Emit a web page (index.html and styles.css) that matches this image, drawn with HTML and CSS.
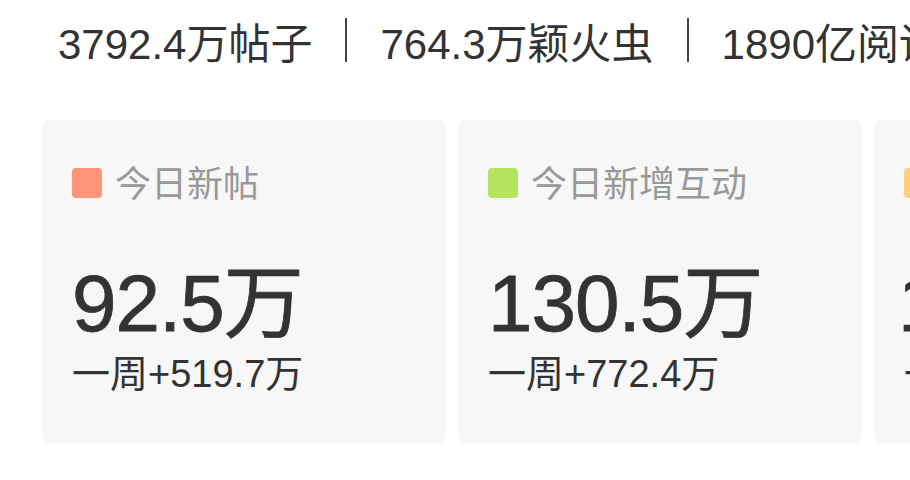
FILE: index.html
```html
<!DOCTYPE html>
<html lang="zh">
<head>
<meta charset="utf-8">
<link rel="stylesheet" href="styles.css">
</head>
<body>
<div class="page">
  <div class="summary">
    <span class="item">3792.4万帖子</span><span class="sep"></span><span class="item">764.3万颖火虫</span><span class="sep"></span><span class="item">1890亿阅读</span>
  </div>
  <div class="cards">
    <div class="card">
      <div class="label"><span class="dot dot-red"></span><span>今日新帖</span></div>
      <div class="value">92.5万</div>
      <div class="week">一周+519.7万</div>
    </div>
    <div class="card">
      <div class="label"><span class="dot dot-green"></span><span>今日新增互动</span></div>
      <div class="value">130.5万</div>
      <div class="week">一周+772.4万</div>
    </div>
    <div class="card">
      <div class="label"><span class="dot dot-yellow"></span><span>今日阅读</span></div>
      <div class="value value-tight">1.2亿</div>
      <div class="week">一周+8.3亿</div>
    </div>
  </div>
</div>
</body>
</html>
```

FILE: styles.css
```css
html, body {
  margin: 0;
  padding: 0;
  background: #ffffff;
}
body {
  font-family: "Liberation Sans", "Noto Sans CJK SC", sans-serif;
  color: #333333;
}
.page {
  width: 910px;
  height: 480px;
  overflow: hidden;
}
.summary {
  display: flex;
  align-items: center;
  white-space: nowrap;
  padding-left: 58px;
  height: 80px;
  font-size: 42px;
  color: #333333;
}
.sep {
  display: inline-block;
  flex: 0 0 2px;
  width: 2px;
  height: 44px;
  margin: 0 33px;
  background: #444444;
}
.cards {
  display: flex;
  gap: 12px;
  padding-left: 42px;
  margin-top: 40px;
}
.card {
  flex: 0 0 404px;
  height: 323px;
  box-sizing: border-box;
  background: #f7f7f7;
  border-radius: 8px;
  padding: 42px 30px 0;
}
.label {
  display: flex;
  align-items: center;
  gap: 13px;
  font-family: "Noto Sans CJK SC", sans-serif;
  font-size: 36px;
  color: #999999;
  height: 38px;
}
.dot {
  width: 30px;
  height: 30px;
  border-radius: 4px;
  flex: 0 0 30px;
  margin-top: 4px;
}
.dot-red { background: #ff9478; }
.dot-green { background: #b5e35e; }
.dot-yellow { background: #ffd27a; }
.value {
  margin-top: 64px;
  font-size: 80px;
  line-height: 80px;
  letter-spacing: -1px;
  -webkit-text-stroke: 0.8px #333333;
  color: #333333;
}
.value-tight {
  margin-left: -6px;
}
.week {
  margin-top: 8px;
  font-size: 38px;
  line-height: 44px;
  color: #333333;
}
```
